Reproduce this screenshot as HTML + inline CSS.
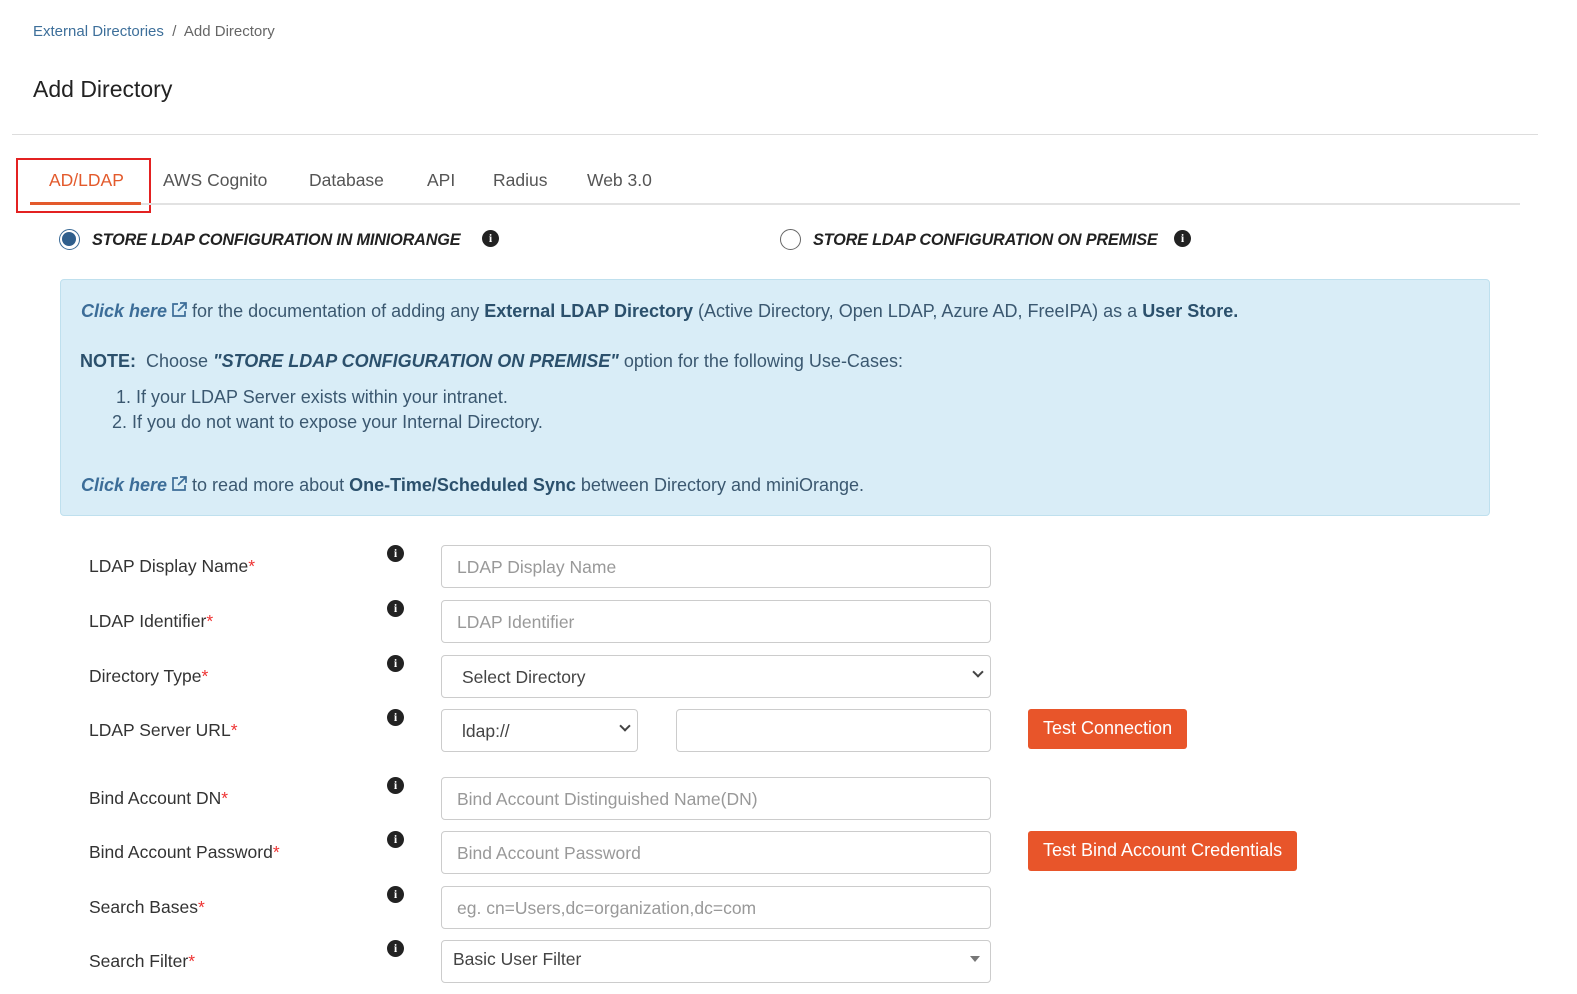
<!DOCTYPE html>
<html><head><meta charset="utf-8"><style>
*{box-sizing:border-box;margin:0;padding:0}
body{width:1577px;height:994px;overflow:hidden;background:#fff;font-family:"Liberation Sans",sans-serif;color:#333;position:relative}
.a{position:absolute;white-space:nowrap}
.bc{top:23px;left:33px;font-size:15px;color:#666}
.bc span{color:#3d6f9a}
h1{position:absolute;top:76px;left:33px;font-size:23px;font-weight:normal;color:#222}
.hr{position:absolute;top:134px;left:12px;width:1526px;height:1px;background:#ddd}
.tabline{position:absolute;top:203px;left:30px;width:1490px;height:2px;background:#e2e2e2}
.tab{position:absolute;top:170px;font-size:17.5px;color:#555}
.inp{position:absolute;left:441px;width:550px;height:43px;border:1px solid #ccc;border-radius:4px;font-size:17.5px;color:#999;padding:11px 15px}
.sel{color:#444;padding-left:20px}
.chev{position:absolute;right:8px;top:12px;width:8px;height:8px;border-right:2px solid #444;border-bottom:2px solid #444;transform:rotate(45deg)}
.lbl{position:absolute;left:89px;font-size:17.5px;color:#333}
.lbl b{color:#e33;font-weight:normal}
.ic{position:absolute;left:387px;width:17px;height:17px;border-radius:50%;background:#222;color:#fff;font:bold 12px "Liberation Serif",serif;text-align:center;line-height:17px}
.btn{position:absolute;left:1028px;height:40px;background:#e8552a;color:#fff;font-size:18px;border-radius:3px;padding:9px 15px}
.box{position:absolute;left:60px;top:279px;width:1430px;height:237px;background:#d9edf7;border:1px solid #bfe0ee;border-radius:4px;color:#3b5870;font-size:18px}
.box i.l{color:#3c6d98;font-weight:bold}
.box b{color:#2b506c}
.ext{display:inline-block;width:18px;height:18px;margin:0 4px 0 3px;vertical-align:-2px}
.radio{position:absolute;width:21px;height:21px;border-radius:50%;border:1.5px solid #666}
.rt{position:absolute;top:231px;font-size:16.3px;font-style:italic;font-weight:bold;color:#222;letter-spacing:-0.2px}
</style></head><body>
<div class="a bc"><span>External Directories</span> &nbsp;/&nbsp; Add Directory</div>
<h1>Add Directory</h1>
<div class="hr"></div>
<div class="a" style="left:16px;top:158px;width:135px;height:55px;border:2px solid #e32121"></div>
<div class="tabline"></div>
<div class="a" style="left:30px;top:202px;width:111px;height:3px;background:#e35a2c"></div>
<div class="tab" style="left:49px;color:#e35a2c">AD/LDAP</div>
<div class="tab" style="left:163px">AWS Cognito</div>
<div class="tab" style="left:309px">Database</div>
<div class="tab" style="left:427px">API</div>
<div class="tab" style="left:493px">Radius</div>
<div class="tab" style="left:587px">Web 3.0</div>

<div class="radio" style="left:59px;top:229px;border-color:#3a6a96"><div style="position:absolute;left:2px;top:2px;width:14px;height:14px;border-radius:50%;background:#2f5e8c"></div></div>
<div class="rt" style="left:92px">STORE LDAP CONFIGURATION IN MINIORANGE</div>
<div class="ic" style="left:482px;top:230px">i</div>
<div class="radio" style="left:780px;top:229px"></div>
<div class="rt" style="left:813px">STORE LDAP CONFIGURATION ON PREMISE</div>
<div class="ic" style="left:1174px;top:230px">i</div>

<div class="box">
<div class="a" style="left:20px;top:21px"><i class="l">Click here</i><svg class="ext" viewBox="0 0 18 18" fill="none" stroke="#3c6d98" stroke-width="1.7"><path d="M8 3H3v12h12v-5"/><path d="M10 2h6v6M16 2L8 10"/></svg>for the documentation of adding any <b>External LDAP Directory</b> (Active Directory, Open LDAP, Azure AD, FreeIPA) as a <b>User Store.</b></div>
<div class="a" style="left:19px;top:71px"><b>NOTE:</b>&nbsp; Choose <i style="font-weight:bold;color:#2b506c">"STORE LDAP CONFIGURATION ON PREMISE"</i> option for the following Use-Cases:</div>
<div class="a" style="left:55px;top:107px">1. If your LDAP Server exists within your intranet.</div>
<div class="a" style="left:51px;top:132px">2. If you do not want to expose your Internal Directory.</div>
<div class="a" style="left:20px;top:195px"><i class="l">Click here</i><svg class="ext" viewBox="0 0 18 18" fill="none" stroke="#3c6d98" stroke-width="1.7"><path d="M8 3H3v12h12v-5"/><path d="M10 2h6v6M16 2L8 10"/></svg>to read more about <b>One-Time/Scheduled Sync</b> between Directory and miniOrange.</div>
</div>

<div class="lbl" style="top:556px">LDAP Display Name<b>*</b></div>
<div class="ic" style="top:545px">i</div>
<div class="inp" style="top:545px">LDAP Display Name</div>

<div class="lbl" style="top:611px">LDAP Identifier<b>*</b></div>
<div class="ic" style="top:600px">i</div>
<div class="inp" style="top:600px">LDAP Identifier</div>

<div class="lbl" style="top:666px">Directory Type<b>*</b></div>
<div class="ic" style="top:655px">i</div>
<div class="inp sel" style="top:655px">Select Directory<div class="chev"></div></div>

<div class="lbl" style="top:720px">LDAP Server URL<b>*</b></div>
<div class="ic" style="top:709px">i</div>
<div class="inp sel" style="top:709px;width:197px">ldap://<div class="chev"></div></div>
<div class="inp" style="top:709px;left:676px;width:315px"></div>
<div class="btn" style="top:709px">Test Connection</div>

<div class="lbl" style="top:788px">Bind Account DN<b>*</b></div>
<div class="ic" style="top:777px">i</div>
<div class="inp" style="top:777px">Bind Account Distinguished Name(DN)</div>

<div class="lbl" style="top:842px">Bind Account Password<b>*</b></div>
<div class="ic" style="top:831px">i</div>
<div class="inp" style="top:831px">Bind Account Password</div>
<div class="btn" style="top:831px">Test Bind Account Credentials</div>

<div class="lbl" style="top:897px">Search Bases<b>*</b></div>
<div class="ic" style="top:886px">i</div>
<div class="inp" style="top:886px">eg. cn=Users,dc=organization,dc=com</div>

<div class="lbl" style="top:951px">Search Filter<b>*</b></div>
<div class="ic" style="top:940px">i</div>
<div class="inp" style="top:940px;color:#444;padding:8px 11px">Basic User Filter<div style="position:absolute;right:10px;top:15px;border:5px solid transparent;border-top:6px solid #777"></div></div>
</body></html>
